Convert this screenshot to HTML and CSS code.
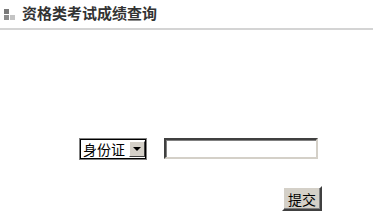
FILE: index.html
```html
<!DOCTYPE html>
<html lang="zh-CN">
<head>
    <meta charset="UTF-8">
    <title>资格类考试成绩查询</title>
    <link rel="stylesheet" href="styles.css">
</head>
<body>

<div class="title-bar">
    <span class="title-icon">
        <i class="sq sq-dark"></i><i class="sq"></i>
        <i class="sq sq-mid"></i><i class="sq sq-light"></i>
    </span>
    <h1>资格类考试成绩查询</h1>
</div>

<form class="query-form" onsubmit="return false;">
    <div class="form-row">
        <span class="select-box">
            <select id="idType" class="id-type">
                <option>身份证</option>
                <option>准考证</option>
            </select>
            <span class="select-arrow"></span>
        </span>
        <input type="text" id="idNumber" class="text-input">
    </div>
    <div class="btn-row">
        <button type="submit" class="btn">提交</button>
    </div>
</form>

</body>
</html>
```

FILE: styles.css
```css
* {
    box-sizing: border-box;
    margin: 0;
    padding: 0;
}

body {
    background: #fff;
    font-family: "Noto Sans CJK SC", "Liberation Sans", sans-serif;
    color: #000;
}

.title-bar {
    display: flex;
    align-items: center;
    height: 30px;
    padding: 0 0 2px 4px;
    border-bottom: 2px solid #d4d4d4;
}

.title-icon {
    display: grid;
    grid-template-columns: 5px 5px;
    grid-template-rows: 5px 5px;
    gap: 1px;
    width: 11px;
    height: 11px;
    flex-shrink: 0;
    margin-right: 7px;
    margin-top: 3px;
}

.sq {
    display: block;
}

.sq-dark {
    background: #7a7a7a;
}

.sq-mid {
    background: #8c8c8c;
}

.sq-light {
    background: #c4c4c4;
}

h1 {
    font-size: 15px;
    font-weight: bold;
    color: #333;
    line-height: 18px;
}

.query-form {
    padding-top: 108px;
}

.form-row {
    display: flex;
    align-items: center;
    padding-left: 80px;
}

.select-box {
    display: flex;
    align-items: center;
    width: 66px;
    height: 20px;
    border: 1px solid #000;
    outline: 1px solid #808080;
    background: #fff;
}

.id-type {
    appearance: none;
    -webkit-appearance: none;
    border: none;
    background: transparent;
    font-family: inherit;
    font-size: 14px;
    width: 48px;
    padding-left: 2px;
    line-height: 18px;
    height: 18px;
    outline: none;
}

.select-arrow {
    position: relative;
    width: 16px;
    height: 16px;
    margin-left: 1px;
    background: #d4d0c8;
    border: 1px solid;
    border-color: #fff #404040 #404040 #fff;
}

.select-arrow::after {
    content: "";
    position: absolute;
    left: 3px;
    top: 5px;
    border-left: 4px solid transparent;
    border-right: 4px solid transparent;
    border-top: 4px solid #000;
}

.text-input {
    width: 154px;
    height: 21px;
    margin-left: 18px;
    border: 2px solid;
    border-color: #404040 #d4d0c8 #d4d0c8 #404040;
    box-shadow: inset 1px 1px 0 #808080;
    font-size: 14px;
    padding: 0 3px;
}

.btn-row {
    display: flex;
    padding-left: 282px;
    margin-top: 27px;
}

.btn {
    width: 40px;
    height: 25px;
    background: #d4d0c8;
    border: 2px solid;
    border-color: #fff #404040 #404040 #fff;
    box-shadow: inset -1px -1px 0 #808080;
    font-family: inherit;
    font-size: 14px;
    color: #000;
    line-height: 18px;
    cursor: pointer;
}
```
